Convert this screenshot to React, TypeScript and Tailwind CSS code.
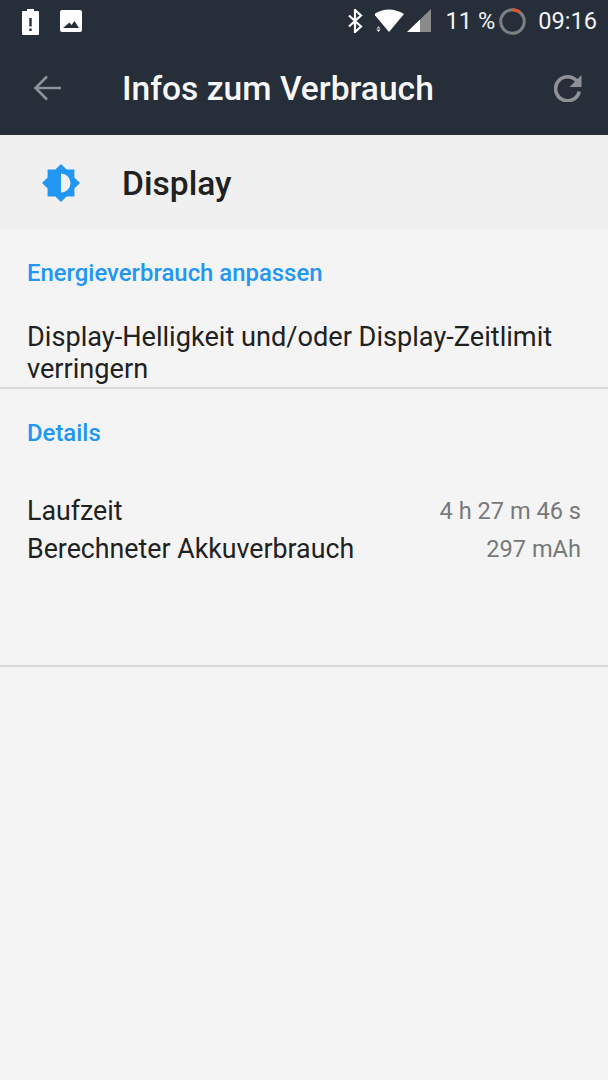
const ROBOTO = "font-['Roboto',sans-serif]";

function StatusBar() {
  return (
    <div className="flex h-[42px] items-center justify-between pl-[22px] pr-[11px]">
      <div className="flex items-center gap-[21px]">
        <svg width="17" height="26" viewBox="0 0 17 26" className="mt-[1px]">
          <path
            fillRule="evenodd"
            fill="#fff"
            d="M5 0h7v2h4a1 1 0 0 1 1 1v22a1 1 0 0 1-1 1H1a1 1 0 0 1-1-1V3a1 1 0 0 1 1-1h4zM7.300 9v8.500h2.400V9zM7.300 19.500v2.400h2.400v-2.400z"
          />
        </svg>
        <svg width="22" height="22" viewBox="0 0 22 22">
          <path
            fillRule="evenodd"
            fill="#fff"
            d="M2 0h18a2 2 0 0 1 2 2v18a2 2 0 0 1-2 2H2a2 2 0 0 1-2-2V2a2 2 0 0 1 2-2zM3 18h16l-4.500-7-3 4-2-2.400z"
          />
        </svg>
      </div>
      <div className="flex items-center">
        <svg width="17" height="24" viewBox="0 0 17 24" className="mr-[11px]">
          <path
            fill="none"
            stroke="#fff"
            strokeWidth="2.200"
            d="M2 6.500l12 11-6 5.500V1l6 5.500-12 11"
          />
        </svg>
        <svg width="56" height="24" viewBox="0 0 56 24" className="mr-[15px]">
          <path fill="#fff" d="M-1 5Q14-4 29 5L14 23z" />
          <path fill="#fff" d="M1.500 19.500L3.500 17l2 2.500z" opacity="0.7" />
          <path fill="#fff" d="M1.500 20.500h4l-2 2.500z" />
          <path fill="#fff" d="M32 23L45 10.500V23z" />
          <path fill="#8b8b8b" d="M45 10.500L56 0v23H45z" />
        </svg>
        <span className={`${ROBOTO} mr-[4px] mt-[1px] text-[23.600px] leading-none text-[#f2f3f4]`}>
          11 %
        </span>
        <svg width="27" height="27" viewBox="0 0 27 27" className="mr-[12px]">
          <circle cx="13.500" cy="13.500" r="11.800" fill="none" stroke="#7d7f81" strokeWidth="3" />
          <path d="M13.500 1.700A11.800 11.800 0 0 1 20.500 4" fill="none" stroke="#e8542a" strokeWidth="3" />
        </svg>
        <span className={`${ROBOTO} mt-[1px] text-[23.600px] leading-none text-[#f2f3f4]`}>
          09:16
        </span>
      </div>
    </div>
  );
}

function AppBar() {
  return (
    <div className="flex h-[93px] items-center pl-[33px] pr-[26px]">
      <svg width="28" height="28" viewBox="0 0 28 28" className="mb-[1px] shrink-0">
        <path
          fill="none"
          stroke="#8e9196"
          strokeWidth="2.600"
          d="M28 14H3M14 2.500L2.500 14 14 25.500"
        />
      </svg>
      <h1 className={`${ROBOTO} ml-[61px] mt-[1px] flex-1 text-[33.600px] font-medium leading-none text-[#f7f7f8]`}>
        Infos zum Verbrauch
      </h1>
      <svg width="28" height="28" viewBox="0 0 28 28" className="mb-[1px] shrink-0">
        <path
          fill="none"
          stroke="#8e9196"
          strokeWidth="3.600"
          d="M22.800 7A12 12 0 1 0 25.300 17.500"
        />
        <path fill="#8e9196" d="M27.500 1v12h-12z" />
      </svg>
    </div>
  );
}

function StatRow({ label, value }: { label: string; value: string }) {
  return (
    <div className="flex h-[38px] items-center justify-between">
      <span className="text-[26.750px] leading-none text-[#212121]">{label}</span>
      <span className="mt-[2px] text-[23.600px] leading-none text-[#77797a]">{value}</span>
    </div>
  );
}

export default function App() {
  return (
    <div className={`${ROBOTO} flex min-h-[1080px] flex-col bg-[#f4f4f4]`}>
      <header className="bg-[#262e39] shadow-[0_1px_2px_rgba(0,0,0,0.3)]">
        <StatusBar />
        <AppBar />
      </header>

      <div className="flex h-[94px] items-center bg-[#f0f0f0] pl-[42px] pt-[2px]">
        <svg width="38" height="38" viewBox="0 0 38 38" className="shrink-0">
          <path
            fill="#2196f3"
            fillRule="evenodd"
            d="M19 0l5.600 5.600h7.800v7.800L38 19l-5.600 5.600v7.800h-7.800L19 38l-5.600-5.600H5.600v-7.800L0 19l5.600-5.600V5.600h7.800zM19 9.500v19a9.500 9.500 0 0 0 0-19z"
          />
        </svg>
        <span className="ml-[42px] mt-[2px] text-[33.600px] font-medium leading-none text-[#212121]">Display</span>
      </div>

      <section className="flex h-[160px] flex-col border-b-2 border-[#d8d8d8] px-[27px]">
        <h2 className="mt-[33px] text-[23.900px] font-medium leading-none text-[#2196f3]">
          Energieverbrauch anpassen
        </h2>
        <p className="mt-[35px] text-[27.150px] leading-[32px] text-[#212121]">
          Display-Helligkeit und/oder Display-Zeitlimit verringern
        </p>
      </section>

      <section className="flex h-[278px] flex-col border-b-2 border-[#d8d8d8] px-[27px]">
        <h2 className="mt-[33px] text-[23.900px] font-medium leading-none text-[#2196f3]">Details</h2>
        <div className="mt-[46px] flex flex-col">
          <StatRow label="Laufzeit" value="4 h 27 m 46 s" />
          <StatRow label="Berechneter Akkuverbrauch" value="297 mAh" />
        </div>
      </section>
    </div>
  );
}
